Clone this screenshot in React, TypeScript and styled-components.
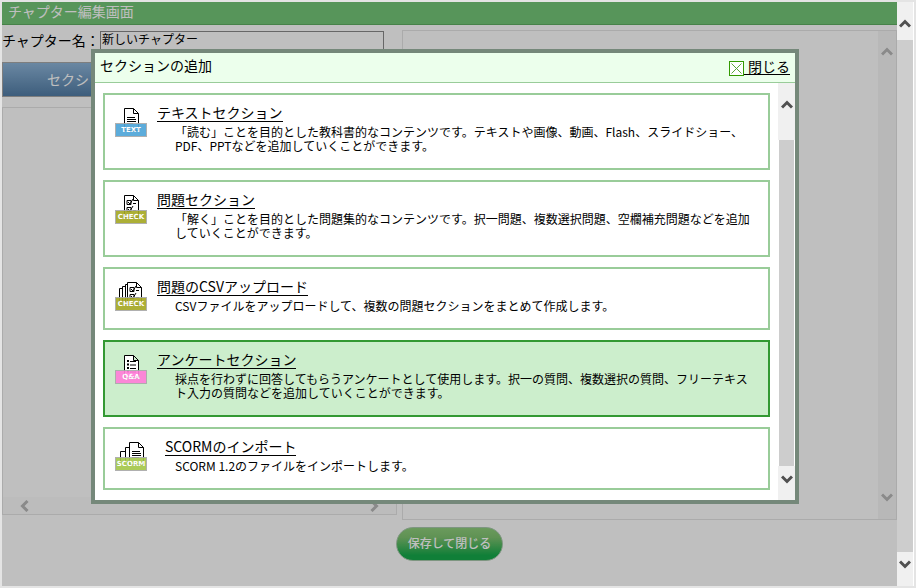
import React from 'react'
import styled, { createGlobalStyle } from 'styled-components'

const Global = createGlobalStyle`
  html, body { margin: 0; padding: 0; background: #fff; overflow: hidden; }
  * { box-sizing: border-box; }
  body { font-family: "Noto Sans CJK JP", "Liberation Sans", sans-serif; color: #000; }
`

type IconKind = 'text' | 'check' | 'csv' | 'qa' | 'scorm'

const badgeColors: Record<IconKind, string> = {
  text: '#4fa6d8',
  check: '#a6a926',
  csv: '#a6a926',
  qa: '#ff7fd9',
  scorm: '#a4c74c',
}

const badgeLabels: Record<IconKind, string> = {
  text: 'TEXT',
  check: 'CHECK',
  csv: 'CHECK',
  qa: 'Q&A',
  scorm: 'SCORM',
}

const Doc = ({ x, y }: { x: number; y: number }) => (
  <path
    d={`M${x + 0.5} ${y + 0.5}h9l5 5v17h-14z M${x + 9.5} ${y + 0.5}v5h5`}
    fill="#fff"
    stroke="#000"
    strokeWidth="1"
  />
)

const IconArt = ({ kind }: { kind: IconKind }) => (
  <svg width="32" height="30" viewBox="0 0 32 30">
    {kind === 'text' && (
      <>
        <Doc x={9} y={0} />
        <path d="M12 9.500h8M12 11.500h9M12 13.500h9M12 15.500h6" stroke="#000" fill="none" />
      </>
    )}
    {kind === 'check' && (
      <>
        <Doc x={9} y={0} />
        <path d="M12 5.500h4v4h-4zM12 12.500h4v4h-4z" stroke="#000" fill="none" />
        <path d="M13 7l2 2 3-5M13 14l2 2 3-5M18 8.500h3M18 15.500h3" stroke="#000" fill="none" />
      </>
    )}
    {kind === 'csv' && (
      <>
        <path d="M4.500 20V6.500h3M7.500 20V4.500h3M10.500 20V2.500h3" stroke="#000" fill="none" />
        <Doc x={12} y={0} />
        <path d="M15 5.500h4v4h-4zM15 12.500h4v4h-4z" stroke="#000" fill="none" />
        <path d="M16 7l2 2 3-5M16 14l2 2 3-5M21 8.500h3M21 15.500h3" stroke="#000" fill="none" />
      </>
    )}
    {kind === 'qa' && (
      <>
        <Doc x={9} y={0} />
        <path d="M12 5h2v2h-2zM12 8.500h2v2h-2zM12 12h2v2h-2zM12 15.500h2v2h-2z" fill="#000" />
        <path d="M15 6.500h6M15 10h6M15 13.500h6M15 17h6" stroke="#000" fill="none" />
      </>
    )}
    {kind === 'scorm' && (
      <>
        <path d="M5.500 20V9.500h5M10.500 20V5.500h5" stroke="#000" fill="none" />
        <Doc x={14} y={0} />
        <path d="M17 9.500h8M17 11.500h9M17 13.500h9M17 15.500h7" stroke="#000" fill="none" />
      </>
    )}
  </svg>
)

const Chevron = ({ dir, color }: { dir: 'up' | 'down' | 'left' | 'right'; color: string }) => {
  const points = {
    up: '1,8.500 6,3.500 11,8.500',
    down: '1,3.500 6,8.500 11,3.500',
    left: '8.500,1 3.500,6 8.500,11',
    right: '3.500,1 8.500,6 3.500,11',
  }[dir]
  return (
    <svg width="12" height="12" viewBox="0 0 12 12">
      <polyline points={points} fill="none" stroke={color} strokeWidth="3" />
    </svg>
  )
}

const sections: { kind: IconKind; title: string; desc: string; active?: boolean; shifted?: boolean }[] = [
  {
    kind: 'text',
    title: 'テキストセクション',
    desc: '「読む」ことを目的とした教科書的なコンテンツです。テキストや画像、動画、Flash、スライドショー、PDF、PPTなどを追加していくことができます。',
  },
  {
    kind: 'check',
    title: '問題セクション',
    desc: '「解く」ことを目的とした問題集的なコンテンツです。択一問題、複数選択問題、空欄補充問題などを追加していくことができます。',
  },
  {
    kind: 'csv',
    title: '問題のCSVアップロード',
    desc: 'CSVファイルをアップロードして、複数の問題セクションをまとめて作成します。',
  },
  {
    kind: 'qa',
    title: 'アンケートセクション',
    desc: '採点を行わずに回答してもらうアンケートとして使用します。択一の質問、複数選択の質問、フリーテキスト入力の質問などを追加していくことができます。',
    active: true,
  },
  {
    kind: 'scorm',
    title: 'SCORMのインポート',
    desc: 'SCORM 1.2のファイルをインポートします。',
    shifted: true,
  },
]

const App = () => {
  return (
    <>
      <Global />
      <Page>
        <Main>
          <HeaderBar>チャプター編集画面</HeaderBar>
          <Columns>
            <LeftColumn>
              <NameRow>
                <NameLabel>チャプター名：</NameLabel>
                <NameInput>新しいチャプター</NameInput>
              </NameRow>
              <TabButton>セクションの追加</TabButton>
              <LeftPanel>
                <HorizontalBar>
                  <Chevron dir="left" color="#b8b8b8" />
                  <Chevron dir="right" color="#b8b8b8" />
                </HorizontalBar>
              </LeftPanel>
            </LeftColumn>
            <RightPanel>
              <PanelBar>
                <Chevron dir="up" color="#b8b8b8" />
                <Chevron dir="down" color="#b8b8b8" />
              </PanelBar>
            </RightPanel>
          </Columns>
          <Footer>
            <SaveButton>保存して閉じる</SaveButton>
          </Footer>
        </Main>
        <WindowBar>
          <BarEnd $h={38} $pad={16}>
            <Chevron dir="up" color="#505050" />
          </BarEnd>
          <BarThumb $inset={0} />
          <BarEnd $h={34} $pad={6}>
            <Chevron dir="down" color="#505050" />
          </BarEnd>
        </WindowBar>
        <Overlay />
        <Modal>
          <ModalHead>
            <ModalTitle>セクションの追加</ModalTitle>
            <CloseLink>
              <CloseBox>
                <svg width="13" height="13" viewBox="0 0 13 13">
                  <path d="M1.500 1.500l10 10M11.500 1.500l-10 10" stroke="#5aa53a" strokeWidth="1" fill="none" />
                </svg>
              </CloseBox>
              <CloseText>閉じる</CloseText>
            </CloseLink>
          </ModalHead>
          <ModalBody>
            <CardList>
              {sections.map((s) => (
                <Card key={s.title} $active={s.active}>
                  <IconWrap>
                    <IconArt kind={s.kind} />
                    <Badge $color={badgeColors[s.kind]}>{badgeLabels[s.kind]}</Badge>
                  </IconWrap>
                  <CardBody>
                    <CardTitle $shifted={s.shifted}>{s.title}</CardTitle>
                    <CardDesc>{s.desc}</CardDesc>
                  </CardBody>
                </Card>
              ))}
            </CardList>
            <ModalBar>
              <BarEnd $h={57} $pad={16}>
                <Chevron dir="up" color="#505050" />
              </BarEnd>
              <BarThumb $inset={1} />
              <BarEnd $h={34} $pad={7}>
                <Chevron dir="down" color="#505050" />
              </BarEnd>
            </ModalBar>
          </ModalBody>
        </Modal>
      </Page>
    </>
  )
}

export default App

const Page = styled.div`
  position: relative;
  width: 916px;
  height: 588px;
  display: flex;
  background: #fff;
  border: 2px solid #e4e4e4;
  overflow: hidden;
`
const Main = styled.div`
  width: 895px;
  display: flex;
  flex-direction: column;
`
const HeaderBar = styled.div`
  height: 23px;
  background: #75c779;
  border-bottom: 1px solid #5fae62;
  color: #fff;
  font-size: 14px;
  line-height: 18px;
  padding-left: 6px;
`
const Columns = styled.div`
  display: grid;
  grid-template-columns: 395px 495px;
  gap: 5px;
  height: 495px;
`
const LeftColumn = styled.div`
  display: flex;
  flex-direction: column;
`
const NameRow = styled.div`
  display: flex;
  align-items: center;
  height: 27px;
  padding-top: 5px;
`
const NameLabel = styled.div`
  width: 98px;
  font-size: 14px;
  line-height: 18px;
  margin-top: -2px;
  white-space: nowrap;
`
const NameInput = styled.div`
  width: 284px;
  height: 20px;
  border: 1px solid #8a8a8a;
  font-size: 12px;
  line-height: 13px;
  padding-left: 1px;
`
const TabButton = styled.div`
  margin-top: 10px;
  height: 35px;
  background: linear-gradient(#8eb5d9, #527da6);
  border: 1px solid #a8a8a8;
  color: #fff;
  font-size: 14px;
  line-height: 33px;
  padding-left: 44px;
`
const LeftPanel = styled.div`
  margin-top: 10px;
  height: 408px;
  border: 1px solid #e4e4e4;
  display: flex;
  flex-direction: column;
  justify-content: flex-end;
`
const HorizontalBar = styled.div`
  height: 17px;
  background: #fbfbfb;
  display: flex;
  justify-content: space-between;
  align-items: center;
  padding: 0 16px;
`
const RightPanel = styled.div`
  margin-top: 5px;
  height: 490px;
  border: 1px solid #e4e4e4;
  display: flex;
  justify-content: flex-end;
`
const PanelBar = styled.div`
  width: 18px;
  background: #f6f6f6;
  display: flex;
  flex-direction: column;
  justify-content: space-between;
  align-items: center;
  padding: 15px 0 16px;
`
const Footer = styled.div`
  flex: 1;
  display: flex;
  justify-content: center;
  padding-top: 7px;
`
const SaveButton = styled.div`
  width: 107px;
  height: 34px;
  border-radius: 17px;
  border: 1px solid #a8c9ac;
  background: linear-gradient(#8fce7c, #7fc370 30%, #16aa4b 85%);
  color: #fff;
  font-size: 12px;
  font-weight: 500;
  line-height: 30px;
  text-align: center;
`
const WindowBar = styled.div`
  width: 16px;
  display: flex;
  flex-direction: column;
`
const BarEnd = styled.div<{ $h: number; $pad: number }>`
  height: ${(p) => p.$h}px;
  flex: none;
  background: #f0f0f0;
  display: flex;
  justify-content: center;
  align-items: flex-start;
  padding-top: ${(p) => p.$pad}px;
`
const BarThumb = styled.div<{ $inset: number }>`
  flex: 1;
  background: #cdcdcd;
  margin: 0 ${(p) => p.$inset}px;
`
const Overlay = styled.div`
  position: absolute;
  left: -2px;
  top: -2px;
  width: 897px;
  height: 588px;
  background: rgba(0, 0, 0, 0.25);
`
const Modal = styled.div`
  position: absolute;
  left: 89px;
  top: 47px;
  width: 708px;
  height: 455px;
  background: #fff;
  border: 4px solid #75887a;
  display: flex;
  flex-direction: column;
`
const ModalHead = styled.div`
  height: 30px;
  flex: none;
  background: #ecffec;
  border-bottom: 1px solid #99cc99;
  display: flex;
  justify-content: space-between;
  align-items: center;
  padding: 0 5px;
`
const ModalTitle = styled.div`
  font-size: 14px;
  line-height: 18px;
  margin-top: -5px;
`
const CloseLink = styled.div`
  display: flex;
  align-items: center;
  border-bottom: 1px solid #000;
  height: 17px;
  margin-top: -3px;
`
const CloseBox = styled.span`
  width: 15px;
  height: 15px;
  border: 1px solid #339900;
  display: block;
  margin-top: 5px;
  margin-right: 4px;
  background: #fff;
  svg { display: block; }
`
const CloseText = styled.span`
  font-size: 14px;
  line-height: 16px;
`
const ModalBody = styled.div`
  flex: 1;
  display: flex;
  min-height: 0;
`
const CardList = styled.div`
  flex: 1;
  padding: 10px 8px 0 8px;
  display: flex;
  flex-direction: column;
  gap: 10px;
`
const Card = styled.div<{ $active?: boolean }>`
  display: flex;
  gap: 10px;
  padding: 9px 10px 15px;
  border: 2px solid ${(p) => (p.$active ? '#339933' : '#99cc99')};
  background: ${(p) => (p.$active ? '#cceecc' : '#fff')};
`
const IconWrap = styled.div`
  position: relative;
  width: 32px;
  height: 30px;
  margin-top: 4px;
  flex: none;
  svg { display: block; }
`
const Badge = styled.span<{ $color: string }>`
  position: absolute;
  left: 0;
  top: 15px;
  width: 32px;
  height: 14px;
  background: ${(p) => p.$color};
  opacity: 0.92;
  border: 1px solid #aaaaaa;
  color: #fff;
  font-family: "DejaVu Sans", sans-serif;
  font-size: 7px;
  font-weight: 700;
  line-height: 12px;
  text-align: center;
  overflow: hidden;
`
const CardBody = styled.div`
  flex: 1;
  min-width: 0;
`
const CardTitle = styled.div<{ $shifted?: boolean }>`
  display: table;
  height: 18px;
  margin-left: ${(p) => (p.$shifted ? 8 : 0)}px;
  border-bottom: 1px solid #000;
  font-size: 14px;
  line-height: 16px;
`
const CardDesc = styled.div`
  margin: 3px 0 0 18px;
  width: 580px;
  font-size: 12px;
  line-height: 14px;
`
const ModalBar = styled.div`
  width: 17px;
  flex: none;
  display: flex;
  flex-direction: column;
`
